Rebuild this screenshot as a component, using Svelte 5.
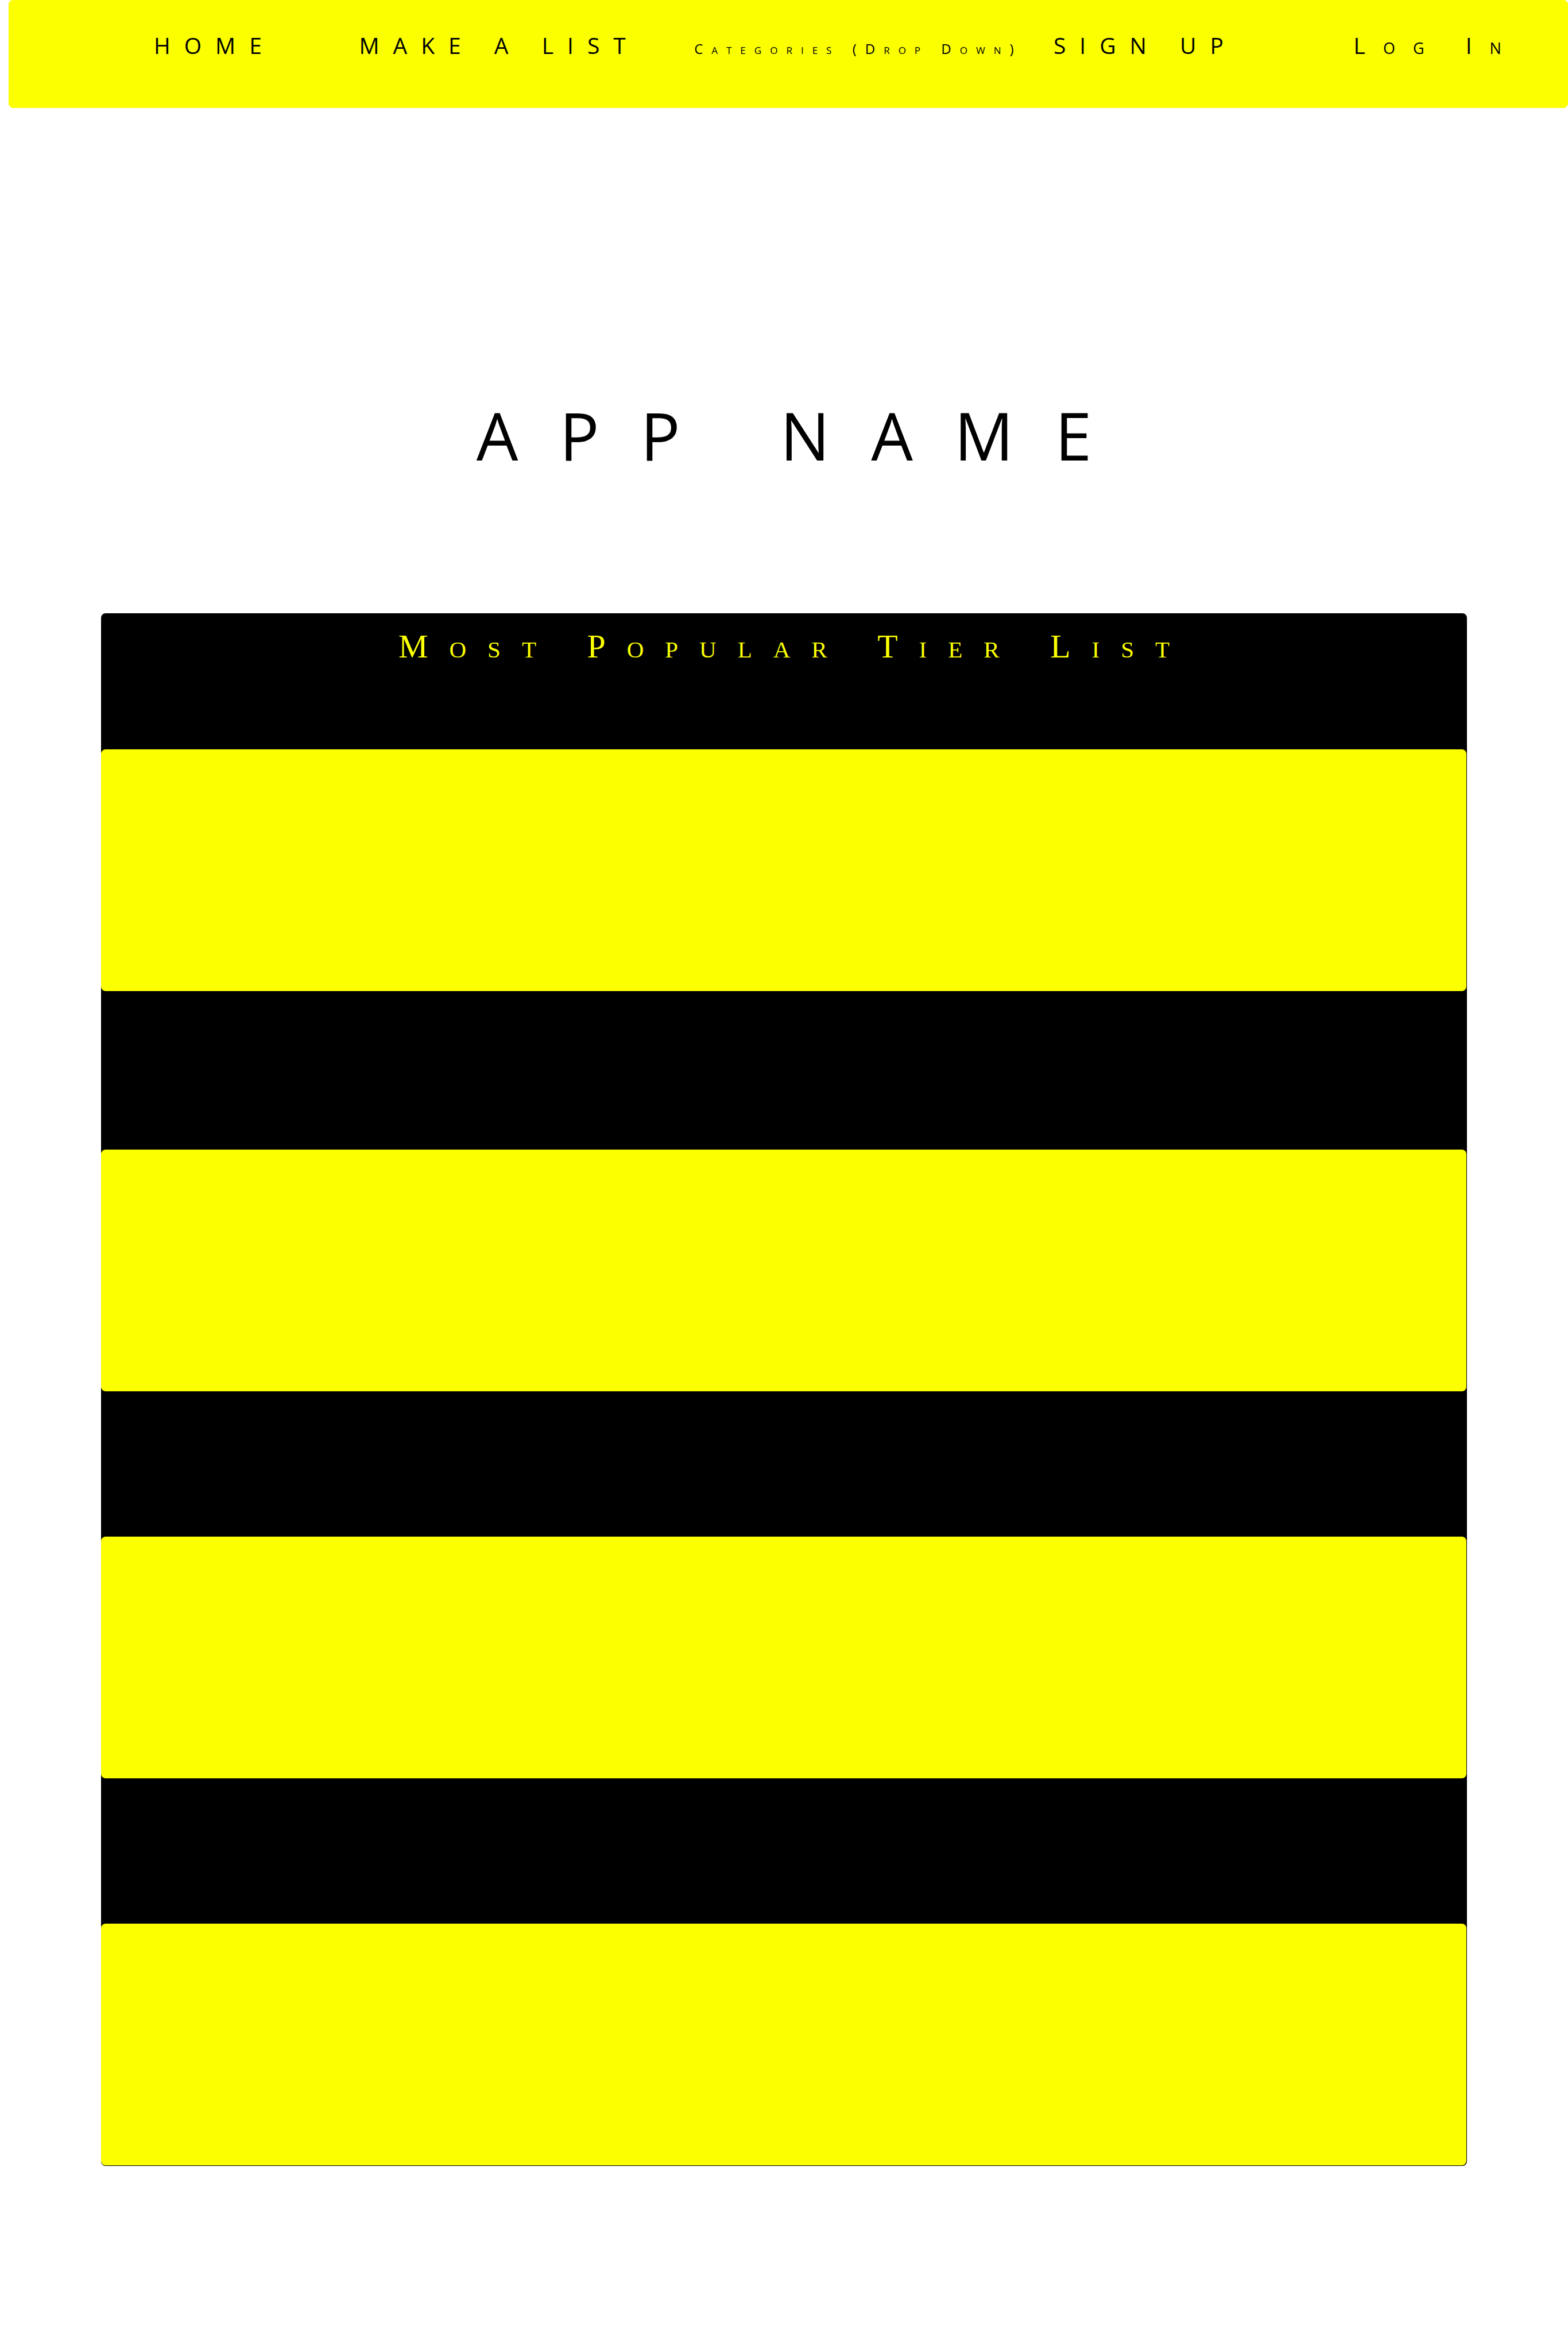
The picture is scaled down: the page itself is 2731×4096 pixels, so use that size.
<script>
  const tiers = [1, 2, 3, 4];
</script>

<div class="page">
  <nav class="bar" aria-label="Main">
    <a href="#home">HOME</a>
    <a href="#make">MAKE A LIST</a>
    <select class="categories" aria-label="Categories">
      <option>Categories (Drop Down)</option>
    </select>
    <a href="#signup">SIGN UP</a>
    <a class="login" href="#login">Log In</a>
  </nav>

  <main>
    <h1>APP NAME</h1>

    <section class="board">
      <h2>Most Popular Tier List</h2>
      <div class="tiers">
        {#each tiers as tier (tier)}
          <div class="tier"></div>
        {/each}
      </div>
    </section>
  </main>
</div>

<style>
  :global(body) {
    margin: 0;
    background: #fff;
  }

  .page {
    font-family: "Open Sans", "Noto Sans", sans-serif;
    color: #000;
    padding-bottom: 324px;
  }

  .bar {
    display: grid;
    grid-template-columns:
      minmax(0, 357fr) minmax(0, 583fr) minmax(0, 625fr)
      minmax(0, 522fr) minmax(0, 373fr);
    align-items: baseline;
    box-sizing: border-box;
    height: 188px;
    margin-left: 15px;
    padding: 55px 0 0 253px;
    border-radius: 8px;
    background: #fbff00;
  }

  .bar a {
    color: inherit;
    text-decoration: none;
    white-space: nowrap;
    font-size: 39px;
    line-height: 48px;
    letter-spacing: 24px;
  }

  .bar .login {
    font-variant: small-caps;
    letter-spacing: 31px;
  }

  .categories {
    appearance: none;
    justify-self: start;
    margin: 0;
    padding: 0;
    border: 0;
    background: none;
    color: inherit;
    font-family: inherit;
    font-size: 24px;
    line-height: 48px;
    font-variant: small-caps;
    letter-spacing: 15px;
  }

  /* The left padding balances the tracking after the last letter. */
  h1 {
    margin: 502px 0 242px;
    padding-left: 72px;
    text-align: center;
    font-size: 115px;
    line-height: 136px;
    font-weight: 400;
    letter-spacing: 72px;
  }

  .board {
    margin: 0 176px;
    border-radius: 8px;
    background: #000;
  }

  h2 {
    box-sizing: border-box;
    height: 237px;
    margin: 0;
    padding: 26px 0 0 37px;
    text-align: center;
    color: #fbff00;
    font-family: "Liberation Serif", serif;
    font-size: 58px;
    line-height: 64px;
    font-weight: 400;
    font-variant: small-caps;
    letter-spacing: 37px;
  }

  .tiers {
    display: grid;
    gap: 253px;
    padding: 0 1px 1px 0;
  }

  .tier {
    height: 421px;
    border-radius: 8px;
    background: #fbff00;
  }

  .tier:first-child {
    margin-bottom: 23px;
  }
</style>
